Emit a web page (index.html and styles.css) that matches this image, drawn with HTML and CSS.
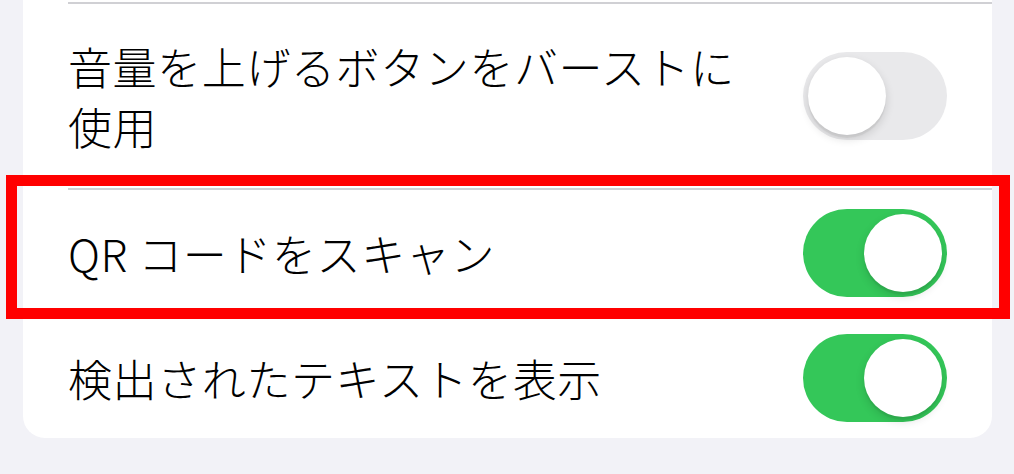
FILE: index.html
```html
<!DOCTYPE html>
<html lang="ja">
<head>
<meta charset="utf-8">
<link rel="stylesheet" href="styles.css">
</head>
<body>
<div class="card">
  <div class="sep"></div>
  <div class="row row-tall">
    <div class="label">音量を上げるボタンをバーストに使用</div>
    <div class="toggle"><div class="knob"></div></div>
  </div>
  <div class="sep"></div>
  <div class="row row-mid">
    <div class="label">QR コードをスキャン</div>
    <div class="toggle on"><div class="knob"></div></div>
  </div>
  <div class="sep"></div>
  <div class="row row-last">
    <div class="label">検出されたテキストを表示</div>
    <div class="toggle on"><div class="knob"></div></div>
  </div>
</div>
<div class="highlight"></div>
</body>
</html>
```
FILE: styles.css
```css
html, body {
  margin: 0;
  padding: 0;
}
body {
  background: #f2f2f7;
  width: 1014px;
  height: 474px;
  overflow: hidden;
  position: relative;
  font-family: "Noto Sans CJK JP", "Noto Sans", sans-serif;
  color: #000;
}
.card {
  margin-left: 23px;
  width: 969px;
  background: #fff;
  border-radius: 0 0 22px 22px;
  padding-top: 2px;
}
.sep {
  height: 2px;
  margin-left: 45px;
  background: #d0d0d4;
}
.row {
  display: flex;
  align-items: center;
  padding-left: 45px;
  padding-right: 45px;
}
.row-tall { height: 184px; }
.row-mid { height: 126px; }
.row-last { height: 120px; }
.label {
  flex: 1;
  font-size: 44px;
  font-weight: 300;
  line-height: 60px;
  letter-spacing: 0.6px;
  margin-right: 40px;
}
.toggle {
  width: 144px;
  height: 88px;
  border-radius: 44px;
  background: #e9e9eb;
  flex: none;
  position: relative;
}
.toggle.on {
  background: #34c759;
}
.knob {
  position: absolute;
  top: 5px;
  left: 5px;
  width: 78px;
  height: 78px;
  border-radius: 50%;
  background: #fff;
  box-shadow: 0 4px 10px rgba(0,0,0,0.14), 0 3px 1px rgba(0,0,0,0.05);
}
.toggle.on .knob {
  left: 61px;
}
.highlight {
  position: absolute;
  left: 6px;
  top: 175px;
  width: 1004px;
  height: 144px;
  box-sizing: border-box;
  border: 11px solid #ff0000;
}
```
